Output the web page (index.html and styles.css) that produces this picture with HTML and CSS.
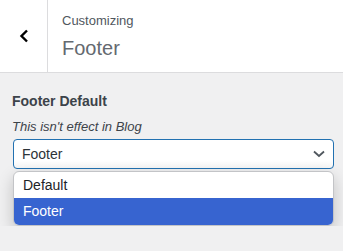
FILE: index.html
```html
<!DOCTYPE html>
<html lang="en">
<head>
    <meta charset="UTF-8">
    <meta name="viewport" content="width=device-width, initial-scale=1.0">
    <title>Customizing Footer</title>
    <link rel="stylesheet" href="styles.css">
</head>
<body>
    <div class="header">
        <button class="back" type="button" aria-label="Back">
            <svg width="10" height="14" viewBox="0 0 10 14"><path d="M8 1.5 L2.5 7 L8 12.5" fill="none" stroke="#000" stroke-width="2.4"/></svg>
        </button>
        <div class="title">
            <span class="crumb">Customizing</span>
            <span class="section">Footer</span>
        </div>
    </div>
    <div class="control">
        <div class="control-label">Footer Default</div>
        <p class="description">This isn't effect in Blog</p>
        <div class="select">
            <span>Footer</span>
            <svg width="12" height="8" viewBox="0 0 12 8"><path d="M1 1.5 L6 6 L11 1.5" fill="none" stroke="#50575e" stroke-width="1.8"/></svg>
        </div>
        <div class="options">
            <div class="option">Default</div>
            <div class="option selected">Footer</div>
        </div>
    </div>
</body>
</html>
```

FILE: styles.css
```css
body {
    margin: 0;
    font-family: "Segoe UI", "Liberation Sans", Arial, sans-serif;
    background-color: #f0f0f1;
    color: #3c434a;
}
.header {
    display: flex;
    height: 72px;
    background-color: #fff;
    border-bottom: 1px solid #dcdcde;
}
.back {
    width: 48px;
    padding: 0;
    border: none;
    border-right: 1px solid #dcdcde;
    background: none;
    display: flex;
    align-items: center;
    justify-content: center;
    cursor: pointer;
}
.title {
    display: flex;
    flex-direction: column;
    padding: 12px 0 0 14px;
}
.crumb {
    font-size: 13px;
    color: #50575e;
    line-height: 18px;
}
.section {
    font-size: 20px;
    font-weight: 300;
    color: #646970;
    line-height: 28px;
    margin-top: 4px;
}
.control {
    padding: 18px 9px 0 13px;
}
.control-label {
    font-size: 14px;
    font-weight: bold;
    line-height: 20px;
    margin-left: -1px;
}
.description {
    margin: 7px 0 0 -1px;
    font-size: 13px;
    font-style: italic;
    line-height: 18px;
}
.select {
    margin-top: 3px;
    height: 30px;
    box-sizing: border-box;
    border: 1px solid #2271b1;
    border-radius: 4px;
    background: linear-gradient(#fff 70%, #f6f6f6);
    display: flex;
    align-items: center;
    justify-content: space-between;
    padding: 0 8px 0 8px;
    font-size: 14px;
    color: #2c3338;
}
.options {
    margin-top: 2px;
    background-color: #fff;
    border: 1px solid #c3c4c7;
    border-radius: 6px;
    overflow: hidden;
    box-shadow: 0 6px 16px rgba(0, 0, 0, 0.2);
    font-size: 14px;
    color: #1d2327;
}
.option {
    height: 26px;
    line-height: 26px;
    padding-left: 9px;
}
.option.selected {
    height: 27px;
    background-color: #3764d0;
    color: #fff;
}
```
